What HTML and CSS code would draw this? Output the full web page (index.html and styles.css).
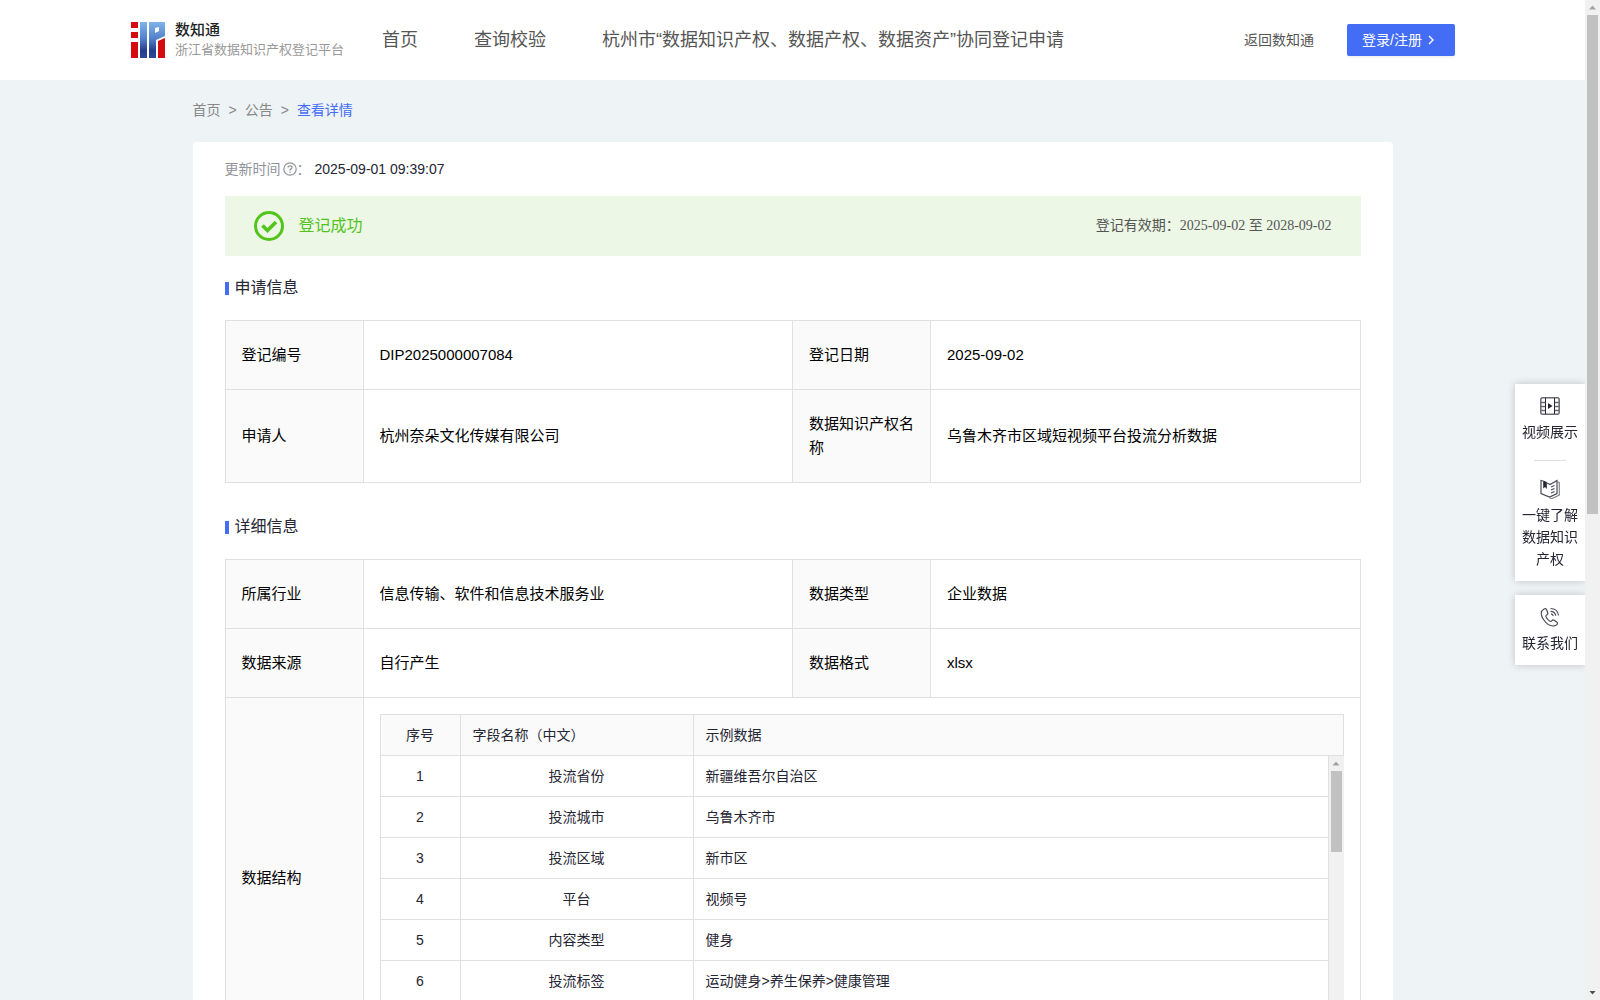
FILE: index.html
```html
<!DOCTYPE html>
<html lang="zh-CN">
<head>
    <meta charset="UTF-8">
    <title>浙江省数据知识产权登记平台</title>
    <link rel="stylesheet" href="styles.css">
</head>
<body>
    <div class="page">
        <header class="header">
            <a class="logo" href="#">
                <svg class="logo-mark" width="34" height="36" viewBox="0 0 34 36">
                    <defs>
                        <linearGradient id="blue" x1="0" y1="0" x2="0" y2="1">
                            <stop offset="0" stop-color="#7fb4ea"/>
                            <stop offset="0.45" stop-color="#5583cb"/>
                            <stop offset="0.8" stop-color="#243d8c"/>
                            <stop offset="1" stop-color="#2f4a9c"/>
                        </linearGradient>
                    </defs>
                    <path fill="#d30a10" d="M0 0h7v6H0zM0 10h7v6H0zM0 20h7v16H0zM27 19l7-3v20h-7z"/>
                    <path fill="url(#blue)" fill-rule="evenodd" d="M9 0h7v36H9zM18 0h16v14l-9 4v18h-7zM24 6v5l4-2V5z"/>
                </svg>
                <span class="logo-text">
                    <strong>数知通</strong>
                    <span>浙江省数据知识产权登记平台</span>
                </span>
            </a>
            <nav class="nav">
                <a href="#">首页</a>
                <a href="#">查询校验</a>
                <a href="#">杭州市“数据知识产权、数据产权、数据资产”协同登记申请</a>
            </nav>
            <a class="back" href="#">返回数知通</a>
            <button class="login" type="button">登录/注册
                <svg width="6" height="10" viewBox="0 0 6 10"><path d="M1 1l4 4-4 4" fill="none" stroke="#fff" stroke-width="1.4"/></svg>
            </button>
        </header>

        <main class="container">
            <div class="breadcrumb">
                <a href="#">首页</a>
                <span>&gt;</span>
                <a href="#">公告</a>
                <span>&gt;</span>
                <a class="current" href="#">查看详情</a>
            </div>

            <div class="card">
                <div class="update">
                    <span>更新时间</span>
                    <svg width="14" height="14" viewBox="0 0 14 14" fill="none" stroke="#909399">
                        <circle cx="7" cy="7" r="6.2" stroke-width="1.2"/>
                        <path d="M5.1 5.6c0-2.4 3.9-2.4 3.9-.1 0 1.400-2 1.400-2 3" stroke-width="1.3"/>
                        <path d="M7 9.600v1.200" stroke-width="1.3"/>
                    </svg>
                    <span class="colon">：</span>
                    <time>2025-09-01 09:39:07</time>
                </div>

                <div class="status">
                    <svg width="30" height="30" viewBox="0 0 30 30" fill="none" stroke="#52c41a">
                        <circle cx="15" cy="15" r="13.5" stroke-width="3"/>
                        <path d="M8.5 14.5l5 5 8.5-8.5" stroke-width="3.6"/>
                    </svg>
                    <span class="status-text">登记成功</span>
                    <span class="valid">登记有效期：2025-09-02 至 2028-09-02</span>
                </div>

                <h2>申请信息</h2>
                <table class="info">
                    <colgroup><col class="label"><col><col class="label"><col></colgroup>
                    <tr>
                        <th>登记编号</th>
                        <td>DIP2025000007084</td>
                        <th>登记日期</th>
                        <td>2025-09-02</td>
                    </tr>
                    <tr>
                        <th>申请人</th>
                        <td>杭州奈朵文化传媒有限公司</td>
                        <th>数据知识产权名称</th>
                        <td>乌鲁木齐市区域短视频平台投流分析数据</td>
                    </tr>
                </table>

                <h2>详细信息</h2>
                <table class="info">
                    <colgroup><col class="label"><col><col class="label"><col></colgroup>
                    <tr>
                        <th>所属行业</th>
                        <td>信息传输、软件和信息技术服务业</td>
                        <th>数据类型</th>
                        <td>企业数据</td>
                    </tr>
                    <tr>
                        <th>数据来源</th>
                        <td>自行产生</td>
                        <th>数据格式</th>
                        <td>xlsx</td>
                    </tr>
                    <tr>
                        <th>数据结构</th>
                        <td class="structure" colspan="3">
                            <table class="fields fields-head">
                                <colgroup><col class="no"><col class="name"><col></colgroup>
                                <tr>
                                    <th>序号</th>
                                    <th>字段名称（中文）</th>
                                    <th>示例数据</th>
                                </tr>
                            </table>
                            <div class="fields-scroll">
                                <div class="fields-body">
                                    <table class="fields">
                                        <colgroup><col class="no"><col class="name"><col></colgroup>
                                        <tr><td>1</td><td>投流省份</td><td>新疆维吾尔自治区</td></tr>
                                        <tr><td>2</td><td>投流城市</td><td>乌鲁木齐市</td></tr>
                                        <tr><td>3</td><td>投流区域</td><td>新市区</td></tr>
                                        <tr><td>4</td><td>平台</td><td>视频号</td></tr>
                                        <tr><td>5</td><td>内容类型</td><td>健身</td></tr>
                                        <tr><td>6</td><td>投流标签</td><td>运动健身&gt;养生保养&gt;健康管理</td></tr>
                                    </table>
                                </div>
                                <div class="scrollbar" aria-hidden="true">
                                    <span class="arrow up"></span>
                                    <span class="track"><span class="thumb thumb-fields"></span></span>
                                    <span class="arrow down"></span>
                                </div>
                            </div>
                        </td>
                    </tr>
                </table>
            </div>
        </main>
    </div>

    <aside class="float">
        <div class="float-card">
            <a href="#">
                <svg width="20" height="20" viewBox="0 0 20 20" fill="none" stroke="#6a6a72" stroke-width="1.5">
                    <rect x="0.8" y="1.8" width="18.4" height="16.4" rx="2"/>
                    <path d="M1 6.500h4M1 10.500h4M1 14.500h4M15 6.500h4M15 10.500h4M15 14.500h4"/>
                    <path d="M5.500 2v16M14.500 2v16" stroke="#252533" stroke-width="1"/>
                    <path d="M8 7v6l4.500-3z" fill="#252533" stroke="none"/>
                </svg>
                视频展示
            </a>
            <a href="#">
                <svg width="20" height="20" viewBox="0 0 20 20" fill="none" stroke="#4a4a55" stroke-width="1.200">
                    <path d="M3 2L1 1.500v13L9.500 18l7.500-3.500V1.500L10 5.500 7 4"/>
                    <path d="M17.500 3l1.800.5V16L12 19.500l-2.500-.5" stroke="#85858d"/>
                    <path d="M3.200 1.500v8l1.800-1.500L6.800 10V3z" fill="#252533" stroke="none"/>
                    <path d="M11 8l3.500-1.500M11 11l3.500-1.500M11 14l3.500-1.500"/>
                </svg>
                一键了解数据知识产权
            </a>
        </div>
        <div class="float-card">
            <a href="#">
                <svg width="20" height="20" viewBox="0 0 20 20" fill="none" stroke="#4a4a55" stroke-width="1.2">
                    <path d="M4 2C.5 4 .3 8 3.500 12.500c3.500 5 8 7.500 12 6 2-.8 2.500-2.300 1.500-3.200l-2.800-2c-1-.7-1.700-.4-2.300.4-.8 1-1.600 1-2.600.2C7.500 12.500 6.500 11 6 9.800c-.3-.9-.1-1.400.8-1.900 1-.6 1.300-1.300.9-2.200L6.500 2.600C6 1.500 5.200 1.300 4 2z"/>
                    <path d="M10.500 1.500c4.500 0 7.500 2.800 8 7M10.500 4.300c3 .1 4.800 1.800 5.200 4.400M11 6.800c1.300.1 1.900.8 2.200 2"/>
                </svg>
                联系我们
            </a>
        </div>
    </aside>

    <div class="scrollbar" aria-hidden="true">
        <span class="arrow up"></span>
        <span class="track"><span class="thumb thumb-page"></span></span>
        <span class="arrow down"></span>
    </div>
</body>
</html>
```

FILE: styles.css
```css
* {
    box-sizing: border-box;
}
html, body {
    height: 100%;
    margin: 0;
}
body {
    display: flex;
    font-family: "Liberation Sans", "Noto Sans CJK SC", sans-serif;
    font-size: 14px;
    line-height: 22px;
    color: #252533;
    background: #eef3f6;
    overflow: hidden;
}
a {
    color: inherit;
    text-decoration: none;
}
svg {
    flex: none;
}
.page {
    flex: 1;
    height: 100%;
    overflow-y: auto;
    scrollbar-width: none;
}

/* scrollbars */
.scrollbar {
    display: flex;
    flex-direction: column;
    flex: none;
    width: 15px;
    background: #f1f1f1;
}
.arrow {
    display: flex;
    align-items: center;
    justify-content: center;
    height: 15px;
}
.arrow::before {
    content: "";
    width: 7px;
    height: 4px;
    background: #a3a3a3;
    clip-path: polygon(50% 0, 100% 100%, 0 100%);
}
.arrow.down::before {
    background: #505050;
    clip-path: polygon(0 0, 100% 0, 50% 100%);
}
.track {
    flex: 1;
    padding: 0 2px;
}
.thumb {
    display: block;
    background: #c1c1c1;
}
.thumb-page {
    height: 51.4%;
}
.thumb-fields {
    height: 81px;
}

/* header */
.header {
    display: flex;
    align-items: center;
    height: 80px;
    padding: 0 130px 0 131px;
    background: #fff;
}
.logo {
    display: flex;
    align-items: center;
    gap: 10px;
}
.logo-text {
    display: flex;
    flex-direction: column;
    font-size: 13px;
    line-height: 20px;
    color: #999;
}
.logo-text strong {
    font-size: 15px;
    font-weight: 500;
    color: #222;
}
.nav {
    display: flex;
    gap: 56px;
    margin-left: 38px;
    font-size: 18px;
    color: #555;
    white-space: nowrap;
}
.back {
    margin-left: auto;
    color: #555;
}
.login {
    display: flex;
    align-items: center;
    gap: 6px;
    width: 108px;
    height: 32px;
    margin-left: 33px;
    padding: 0 15px;
    border: 0;
    border-radius: 2px;
    background: #446df5;
    box-shadow: 0 2px 2px rgba(0, 0, 0, 0.05);
    color: #fff;
    font: inherit;
    white-space: nowrap;
}

/* content */
.container {
    max-width: 1200px;
    min-height: 1868px;
    margin: 0 auto;
}
.breadcrumb {
    display: flex;
    gap: 8px;
    padding: 19px 0 21px;
    color: #888;
}
.breadcrumb .current {
    color: #446df5;
}
.card {
    min-height: 1700px;
    padding: 16px 32px;
    background: #fff;
    border-radius: 4px;
}
.update {
    display: flex;
    align-items: center;
    margin-bottom: 16px;
    color: #909399;
}
.update svg {
    margin-left: 2px;
}
.update time {
    margin-left: 4px;
    color: #252533;
}
.status {
    display: flex;
    align-items: center;
    height: 60px;
    padding: 0 29px;
    background: #ecf7e6;
}
.status-text {
    margin-left: 15px;
    font-size: 16px;
    color: #52c41a;
}
.valid {
    margin-left: auto;
    font-family: "Liberation Serif", "Noto Sans CJK SC", serif;
    color: #555;
}
h2 {
    display: flex;
    align-items: center;
    gap: 6px;
    height: 64px;
    margin: 0;
    font-size: 16px;
    font-weight: 400;
}
h2::before {
    content: "";
    width: 4px;
    height: 13px;
    background: #446df5;
}
table {
    width: 100%;
    border-collapse: collapse;
    table-layout: fixed;
}
th, td {
    border: 1px solid #e0e0e0;
    text-align: left;
    font-weight: 400;
}
th {
    background: #fafafa;
}
.info {
    margin-bottom: 12px;
    font-size: 15px;
    line-height: 24px;
    color: #000;
}
.info .label {
    width: 138px;
}
.info th, .info td {
    padding: 22px 16px;
}
.info .structure {
    padding: 16px;
}

/* field list inside the structure row */
.info .fields {
    margin: 0;
    font-size: 14px;
    line-height: 22px;
    color: #252533;
}
.fields .no {
    width: 80px;
}
.fields .name {
    width: 233px;
}
.info .fields th, .info .fields td {
    padding: 9px 12px;
}
.info .fields th:first-child,
.info .fields td:first-child,
.info .fields td:nth-child(2) {
    text-align: center;
}
.fields-scroll {
    display: flex;
    height: 286px;
    overflow: hidden;
}
.fields-body {
    flex: 1;
    overflow-y: auto;
    scrollbar-width: none;
}
.fields-body tr:first-child td {
    border-top: 0;
}

/* side buttons */
.float {
    position: fixed;
    top: 384px;
    right: 15px;
    width: 70px;
}
.float-card {
    margin-bottom: 14px;
    padding: 0 6px;
    background: #fff;
    box-shadow: 0 0 8px rgba(0, 0, 0, 0.2);
    clip-path: inset(-10px 0 -10px -10px);
}
.float-card a {
    display: flex;
    flex-direction: column;
    align-items: center;
    gap: 5px;
    padding: 12px 0 11px;
    text-align: center;
}
.float-card a + a::before {
    content: "";
    width: 32px;
    height: 1px;
    margin: 6px 0 13px;
    background: #e0e0e0;
}
.float-card a + a {
    padding-top: 0;
}
```
